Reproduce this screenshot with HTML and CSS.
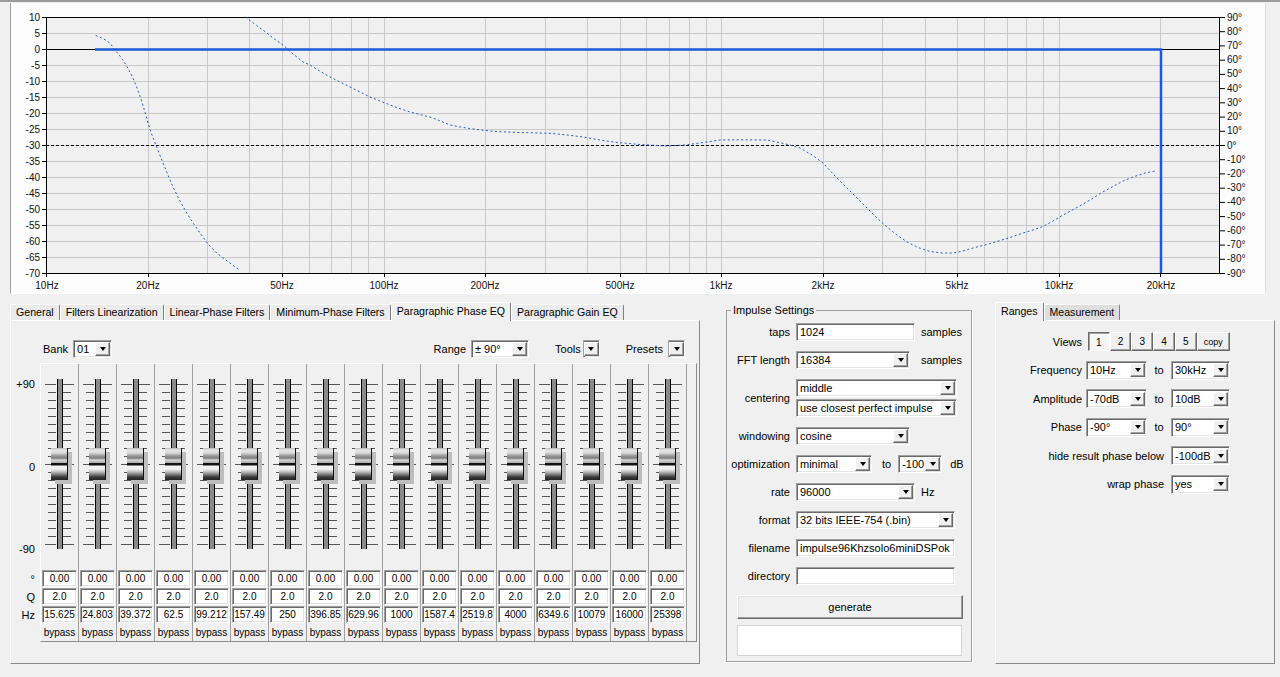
FILE: index.html
```html
<!DOCTYPE html>
<html lang="en">
<head>
<meta charset="UTF-8">
<title>rePhase</title>
<link rel="stylesheet" href="styles.css">
</head>
<body>
<div class="topbar"></div>

<!-- GRAPH -->
<div class="graph">
    <svg width="1254" height="290" viewBox="11 3 1254 290" font-family="Liberation Sans, Arial, sans-serif" font-size="10">
        <rect x="46" y="17" width="1174" height="256" fill="#f0f0f0"/>
        <path stroke="#c9c9c9" stroke-width="1" fill="none" d="
            M148.5 17V273 M207.5 17V273 M249.5 17V273 M282.5 17V273 M309.5 17V273 M331.5 17V273 M351.5 17V273 M368.5 17V273
            M384.5 17V273 M485.5 17V273 M545.5 17V273 M587.5 17V273 M620.5 17V273 M646.5 17V273 M669.5 17V273 M689.5 17V273 M706.5 17V273
            M721.5 17V273 M823.5 17V273 M882.5 17V273 M925.5 17V273 M957.5 17V273 M984.5 17V273 M1007.5 17V273 M1026.5 17V273 M1043.5 17V273
            M1059.5 17V273 M1160.5 17V273
            M46 33.5H1220 M46 65.5H1220 M46 81.5H1220 M46 97.5H1220 M46 113.5H1220 M46 129.5H1220 M46 145.5H1220
            M46 161.5H1220 M46 177.5H1220 M46 193.5H1220 M46 209.5H1220 M46 225.5H1220 M46 241.5H1220 M46 257.5H1220"/>
        <rect x="46.5" y="17.5" width="1173" height="256" fill="none" stroke="#000"/>
        <path stroke="#000" fill="none" d="
            M42 17.5H46 M42 33.5H46 M42 49.5H46 M42 65.5H46 M42 81.5H46 M42 97.5H46 M42 113.5H46 M42 129.5H46 M42 145.5H46
            M42 161.5H46 M42 177.5H46 M42 193.5H46 M42 209.5H46 M42 225.5H46 M42 241.5H46 M42 257.5H46 M42 273.5H46
            M1220 31.7H1225 M1220 45.9H1225 M1220 60.2H1225 M1220 74.4H1225 M1220 88.6H1225 M1220 102.8H1225 M1220 117.1H1225
            M1220 131.3H1225 M1220 145.5H1225 M1220 159.7H1225 M1220 173.9H1225 M1220 188.2H1225 M1220 202.4H1225 M1220 216.6H1225
            M1220 230.8H1225 M1220 245.1H1225 M1220 259.3H1225 M1220 17.5H1225 M1220 273.5H1225
            M46.5 273V277 M148.5 273V277 M282.5 273V277 M384.5 273V277 M485.5 273V277 M620.5 273V277 M721.5 273V277
            M823.5 273V277 M957.5 273V277 M1059.5 273V277 M1160.5 273V277"/>
        <path stroke="#000" d="M46 49.5H1220"/>
        <path stroke="#000" stroke-dasharray="3 2" d="M46 145.5H1220"/>
        <path stroke="#1c5ad8" stroke-width="2.5" fill="none" d="M95 49.5H1161V273"/>
        <path stroke="#2455c4" stroke-width="1" stroke-dasharray="2 2.5" fill="none" d="
            M95.7 35.5L103 38.5 110 43 115 50 120 56 126.7 66 132 76 136.7 87 141 99 145 112 148 123 152 135 156.7 147 163 163 168 175
            173 187 180 201 186.7 213 193 223 200 233 208 244 216.7 253 223 258 230 263 240 270.5
            M245.5 17L252 22 260 28 267 33 273 38 283 45 292 53 303 62 310 65 318 70 330 77 340 82 350 87 360 92 370 97 385 103
            398 108 410 112 422 115 433 118 450 125 463 127.5 477 129.5 490 131 500 131.7 520 132.5 550 133.3 567 135 583 137
            600 140 617 142.5 640 144.5 667 146 685 145 700 143 720 140 740 139.8 767 140 780 142.7 790 145 800 148 812 155
            823 163 835 176 847 188 857 198 867 208 877 218 887 227 897 235 907 242 918 247.5 930 251.5 942 253 953 253 963 251
            973 248 985 245 997 241.5 1010 237.5 1023 233 1033 230 1043 226.5 1053 221 1063 215 1077 207.5 1090 200 1101 193
            1113 186.5 1123 181 1133 177 1145 173 1157 170.7"/>
        <g text-anchor="end" fill="#111">
            <text x="40" y="20.5">10</text><text x="40" y="36.5">5</text><text x="40" y="52.5">0</text>
            <text x="40" y="68.5">-5</text><text x="40" y="84.5">-10</text><text x="40" y="100.5">-15</text>
            <text x="40" y="116.5">-20</text><text x="40" y="132.5">-25</text><text x="40" y="148.5">-30</text>
            <text x="40" y="164.5">-35</text><text x="40" y="180.5">-40</text><text x="40" y="196.5">-45</text>
            <text x="40" y="212.5">-50</text><text x="40" y="228.5">-55</text><text x="40" y="244.5">-60</text>
            <text x="40" y="260.5">-65</text><text x="40" y="276.5">-70</text>
        </g>
        <g fill="#111">
            <text x="1227" y="20.5">90°</text><text x="1227" y="34.7">80°</text><text x="1227" y="48.9">70°</text>
            <text x="1227" y="63.2">60°</text><text x="1227" y="77.4">50°</text><text x="1227" y="91.6">40°</text>
            <text x="1227" y="105.8">30°</text><text x="1227" y="120.1">20°</text><text x="1227" y="134.3">10°</text>
            <text x="1227" y="148.5">0°</text><text x="1227" y="162.7">-10°</text><text x="1227" y="176.9">-20°</text>
            <text x="1227" y="191.2">-30°</text><text x="1227" y="205.4">-40°</text><text x="1227" y="219.6">-50°</text>
            <text x="1227" y="233.8">-60°</text><text x="1227" y="248.1">-70°</text><text x="1227" y="262.3">-80°</text>
            <text x="1227" y="276.5">-90°</text>
        </g>
        <g text-anchor="middle" fill="#111">
            <text x="47" y="289">10Hz</text><text x="148" y="289">20Hz</text><text x="282" y="289">50Hz</text>
            <text x="384" y="289">100Hz</text><text x="485" y="289">200Hz</text><text x="620" y="289">500Hz</text>
            <text x="721" y="289">1kHz</text><text x="823" y="289">2kHz</text><text x="957" y="289">5kHz</text>
            <text x="1059" y="289">10kHz</text><text x="1161" y="289">20kHz</text>
        </g>
    </svg>
</div>

<div class="bottom">
    <!-- LEFT TABS -->
    <div class="tabctl eq-tabs">
        <div class="tabs">
            <div class="tab">General</div>
            <div class="tab">Filters Linearization</div>
            <div class="tab">Linear-Phase Filters</div>
            <div class="tab">Minimum-Phase Filters</div>
            <div class="tab active">Paragraphic Phase EQ</div>
            <div class="tab">Paragraphic Gain EQ</div>
        </div>
        <div class="tab-panel eq-panel">
            <div class="bank-row">
                <span>Bank</span>
                <div class="combo w-bank"><span class="text">01</span><span class="drop"></span></div>
                <span class="push">Range</span>
                <div class="combo w-range"><span class="text">± 90°</span><span class="drop"></span></div>
                <span class="gap-l">Tools</span>
                <div class="combo w-btn tools"><span class="drop"></span></div>
                <span class="gap-l">Presets</span>
                <div class="combo w-btn"><span class="drop"></span></div>
            </div>

            <div class="fader-area">
                <div class="scale">
                    <div class="scale-top"><span>+90</span><span>0</span><span>-90</span></div>
                    <div class="scale-row">°</div>
                    <div class="scale-row">Q</div>
                    <div class="scale-row">Hz</div>
                </div>
                <div class="group">
                    <div class="strip"><div class="fader"><span class="knob"></span></div><div class="val">0.00</div><div class="val">2.0</div><div class="val">15.625</div><div class="bypass">bypass</div></div>
                    <div class="strip"><div class="fader"><span class="knob"></span></div><div class="val">0.00</div><div class="val">2.0</div><div class="val">24.803</div><div class="bypass">bypass</div></div>
                    <div class="strip"><div class="fader"><span class="knob"></span></div><div class="val">0.00</div><div class="val">2.0</div><div class="val">39.372</div><div class="bypass">bypass</div></div>
                    <div class="strip"><div class="fader"><span class="knob"></span></div><div class="val">0.00</div><div class="val">2.0</div><div class="val">62.5</div><div class="bypass">bypass</div></div>
                    <div class="strip"><div class="fader"><span class="knob"></span></div><div class="val">0.00</div><div class="val">2.0</div><div class="val">99.212</div><div class="bypass">bypass</div></div>
                    <div class="strip"><div class="fader"><span class="knob"></span></div><div class="val">0.00</div><div class="val">2.0</div><div class="val">157.49</div><div class="bypass">bypass</div></div>
                    <div class="strip"><div class="fader"><span class="knob"></span></div><div class="val">0.00</div><div class="val">2.0</div><div class="val">250</div><div class="bypass">bypass</div></div>
                    <div class="strip"><div class="fader"><span class="knob"></span></div><div class="val">0.00</div><div class="val">2.0</div><div class="val">396.85</div><div class="bypass">bypass</div></div>
                    <div class="strip"><div class="fader"><span class="knob"></span></div><div class="val">0.00</div><div class="val">2.0</div><div class="val">629.96</div><div class="bypass">bypass</div></div>
                    <div class="strip"><div class="fader"><span class="knob"></span></div><div class="val">0.00</div><div class="val">2.0</div><div class="val">1000</div><div class="bypass">bypass</div></div>
                    <div class="strip"><div class="fader"><span class="knob"></span></div><div class="val">0.00</div><div class="val">2.0</div><div class="val">1587.4</div><div class="bypass">bypass</div></div>
                    <div class="strip"><div class="fader"><span class="knob"></span></div><div class="val">0.00</div><div class="val">2.0</div><div class="val">2519.8</div><div class="bypass">bypass</div></div>
                    <div class="strip"><div class="fader"><span class="knob"></span></div><div class="val">0.00</div><div class="val">2.0</div><div class="val">4000</div><div class="bypass">bypass</div></div>
                    <div class="strip"><div class="fader"><span class="knob"></span></div><div class="val">0.00</div><div class="val">2.0</div><div class="val">6349.6</div><div class="bypass">bypass</div></div>
                    <div class="strip"><div class="fader"><span class="knob"></span></div><div class="val">0.00</div><div class="val">2.0</div><div class="val">10079</div><div class="bypass">bypass</div></div>
                    <div class="strip"><div class="fader"><span class="knob"></span></div><div class="val">0.00</div><div class="val">2.0</div><div class="val">16000</div><div class="bypass">bypass</div></div>
                    <div class="strip"><div class="fader"><span class="knob"></span></div><div class="val">0.00</div><div class="val">2.0</div><div class="val">25398</div><div class="bypass">bypass</div></div>
                </div>
            </div>
        </div>
    </div>

    <!-- IMPULSE SETTINGS -->
    <fieldset class="impulse">
        <legend>Impulse Settings</legend>
        <div class="imp-grid">
            <span class="lbl">taps</span>
            <div class="field w-119">1024</div>
            <span class="unit">samples</span>

            <span class="lbl">FFT length</span>
            <div class="combo w-114"><span class="text">16384</span><span class="drop"></span></div>
            <span class="unit">samples</span>

            <span class="lbl">centering</span>
            <div class="stack">
                <div class="combo w-161"><span class="text">middle</span><span class="drop"></span></div>
                <div class="combo w-161"><span class="text">use closest perfect impulse</span><span class="drop"></span></div>
            </div>

            <span class="lbl">windowing</span>
            <div class="combo w-114 span"><span class="text">cosine</span><span class="drop"></span></div>

            <span class="lbl">optimization</span>
            <div class="opt span">
                <div class="combo w-76"><span class="text">minimal</span><span class="drop"></span></div>
                <span class="to">to</span>
                <div class="combo w-44"><span class="text">-100</span><span class="drop"></span></div>
                <span class="db">dB</span>
            </div>

            <span class="lbl">rate</span>
            <div class="combo w-119"><span class="text">96000</span><span class="drop"></span></div>
            <span class="unit">Hz</span>

            <span class="lbl">format</span>
            <div class="combo w-159 span"><span class="text">32 bits IEEE-754 (.bin)</span><span class="drop"></span></div>

            <span class="lbl">filename</span>
            <div class="field w-159 span">impulse96Khzsolo6miniDSPok</div>

            <span class="lbl">directory</span>
            <div class="field w-159 span"></div>
        </div>
        <button class="generate">generate</button>
        <div class="output"></div>
    </fieldset>

    <!-- RANGES -->
    <div class="tabctl ranges-tabs">
        <div class="tabs">
            <div class="tab active">Ranges</div>
            <div class="tab dim">Measurement</div>
        </div>
        <div class="tab-panel ranges-panel">
            <div class="ranges-grid">
                <span class="lbl">Views</span>
                <div class="views">
                    <span class="vbtn pressed">1</span>
                    <span class="vbtn">2</span>
                    <span class="vbtn">3</span>
                    <span class="vbtn">4</span>
                    <span class="vbtn">5</span>
                    <span class="vbtn copy">copy</span>
                </div>

                <span class="lbl">Frequency</span>
                <div class="combo"><span class="text">10Hz</span><span class="drop"></span></div>
                <span class="to">to</span>
                <div class="combo"><span class="text">30kHz</span><span class="drop"></span></div>

                <span class="lbl">Amplitude</span>
                <div class="combo"><span class="text">-70dB</span><span class="drop"></span></div>
                <span class="to">to</span>
                <div class="combo"><span class="text">10dB</span><span class="drop"></span></div>

                <span class="lbl">Phase</span>
                <div class="combo"><span class="text">-90°</span><span class="drop"></span></div>
                <span class="to">to</span>
                <div class="combo"><span class="text">90°</span><span class="drop"></span></div>

                <span class="lbl wide">hide result phase below</span>
                <div class="combo"><span class="text">-100dB</span><span class="drop"></span></div>

                <span class="lbl wide">wrap phase</span>
                <div class="combo"><span class="text">yes</span><span class="drop"></span></div>
            </div>
        </div>
    </div>
</div>
</body>
</html>
```

FILE: styles.css
```css
* {
    box-sizing: border-box;
}

body {
    margin: 0;
    width: 1280px;
    height: 677px;
    overflow: hidden;
    background: #f0f0f0;
    font-family: "Liberation Sans", Arial, sans-serif;
    font-size: 11px;
    color: #000;
}

.topbar {
    height: 2px;
    background: #9b9b9b;
}

/* GRAPH */
.graph {
    margin: 1px 14px 0 10px;
    height: 291px;
    background: #fcfcfc;
    border-left: 1px solid #a0a0a0;
    border-right: 1px solid #dcdcdc;
    border-bottom: 1px solid #fff;
}

.graph svg {
    display: block;
}

/* BOTTOM AREA */
.bottom {
    display: flex;
    align-items: flex-start;
    margin-top: 8px;
    padding-left: 10px;
}

/* TAB CONTROLS */
.tabs {
    display: flex;
    height: 18px;
}

.tab {
    margin-top: 2px;
    height: 16px;
    padding: 0 5px;
    font-size: 10.6px;
    line-height: 14px;
    white-space: nowrap;
    background: #ebebeb;
    border: 1px solid;
    border-color: #fff #808080 transparent #fff;
    border-bottom: none;
    border-radius: 2px 2px 0 0;
}

.tab.active {
    position: relative;
    z-index: 1;
    margin-top: 0;
    height: 19px;
    line-height: 17px;
    background: #f0f0f0;
}

.tab.dim {
    background: #dedede;
}

.tab-panel {
    border: 1px solid;
    border-color: #fff #8a8a8a #8a8a8a #fff;
}

.eq-tabs {
    width: 690px;
}

.eq-panel {
    height: 344px;
}

/* BANK ROW */
.bank-row {
    display: flex;
    align-items: center;
    gap: 5px;
    margin: 19px 14px 0 32px;
}

.push {
    margin-left: auto;
}

.gap-l {
    margin-left: 21px;
}

.tools {
    margin-left: -3px;
}

/* COMBO BOXES AND FIELDS */
.combo, .field, .val {
    background: #fff;
    border: 1px solid;
    border-color: #a0a0a0 #fff #fff #a0a0a0;
    box-shadow: inset 1px 1px 0 #696969, inset -1px -1px 0 #e3e3e3;
}

.combo {
    display: flex;
    align-items: center;
    height: 18px;
}

.combo .text {
    flex: 1;
    padding-left: 3px;
    white-space: nowrap;
    overflow: hidden;
}

.combo .drop {
    flex: none;
    display: flex;
    align-items: center;
    justify-content: center;
    width: 15px;
    height: 14px;
    margin-right: 1px;
    background: #f0f0f0;
    border: 1px solid;
    border-color: #fff #696969 #696969 #fff;
    box-shadow: inset -1px -1px 0 #a0a0a0;
}

.combo .drop::after {
    content: "";
    border-top: 4px solid #000;
    border-left: 3.5px solid transparent;
    border-right: 3.5px solid transparent;
}

.field {
    height: 18px;
    padding-left: 3px;
    line-height: 16px;
    white-space: nowrap;
}

.w-bank { width: 39px; }
.w-range { width: 58px; }
.w-btn { width: 17px; }
.w-44 { width: 44px; }
.w-76 { width: 76px; }
.w-114 { width: 114px; }
.w-119 { width: 119px; }
.w-159 { width: 159px; }
.w-161 { width: 161px; }

/* FADERS */
.fader-area {
    display: flex;
    margin-top: 5px;
}

.scale {
    width: 29px;
    padding-right: 5px;
    text-align: right;
}

.scale-top {
    display: flex;
    flex-direction: column;
    justify-content: space-between;
    height: 207px;
    padding: 15px 0;
    line-height: 12px;
}

.scale-row {
    height: 18px;
    line-height: 18px;
}

.group {
    display: flex;
    padding-right: 9px;
    border: 1px solid;
    border-color: #fff #8a8a8a #8a8a8a #fff;
}

.strip {
    width: 38px;
    height: 277px;
    border-right: 1px solid #a0a0a0;
}

.fader {
    position: relative;
    height: 206px;
    background:
        linear-gradient(#555, #555) 4px 100px / 29px 1px no-repeat,
        linear-gradient(#555, #555) 4px 20px / 11px 1px no-repeat,
        linear-gradient(#555, #555) 22px 20px / 11px 1px no-repeat,
        linear-gradient(#555, #555) 4px 180px / 11px 1px no-repeat,
        linear-gradient(#555, #555) 22px 180px / 11px 1px no-repeat,
        repeating-linear-gradient(to bottom, #555 0 1px, transparent 1px 8px) 7px 20px / 8px 161px no-repeat,
        repeating-linear-gradient(to bottom, #555 0 1px, transparent 1px 8px) 22px 20px / 8px 161px no-repeat;
}

/* slider track */
.fader::before {
    content: "";
    position: absolute;
    left: 16px;
    top: 15px;
    width: 4px;
    height: 170px;
    background: #8a8a8a;
    border: 1px solid #000;
    border-width: 0 1px;
}

.knob {
    position: absolute;
    left: 10px;
    top: 84px;
    width: 17px;
    height: 32px;
    border-right: 1px solid #111;
    box-shadow: 4px 4px 0 #bdbdbd;
    background: linear-gradient(to bottom,
        #b8b8b8 0, #e6e6e6 2px, #dadada 5px, #a8a8a8 7px, #7a7a7a 10px,
        #d6d6d6 12px, #b0b0b0 14.5px, #111 15px, #111 17px, #f4f4f4 18px,
        #f0f0f0 21px, #cfcfcf 23px, #8a8a8a 26px, #3a3a3a 29px, #222 32px);
}

.val {
    width: 35px;
    height: 17px;
    margin: 0 0 1px 1px;
    font-size: 10px;
    line-height: 15px;
    text-align: center;
}

.bypass {
    font-size: 10px;
    line-height: 17px;
    text-align: center;
}

/* IMPULSE SETTINGS */
.impulse {
    width: 246px;
    margin: 2px 0 0 26px;
    padding: 0 0 5px;
    border: 1px solid #a0a0a0;
    box-shadow: 1px 1px 0 #fff;
}

.impulse legend {
    margin-left: 4px;
    padding: 0 2px;
    line-height: 13px;
}

.imp-grid {
    display: grid;
    grid-template-columns: 63px 119px auto;
    column-gap: 6px;
    row-gap: 10px;
    align-items: center;
    margin-top: 6px;
}

.lbl {
    text-align: right;
    white-space: nowrap;
}

.span {
    grid-column: 2 / 4;
}

.stack {
    grid-column: 2 / 4;
    display: flex;
    flex-direction: column;
    gap: 2px;
}

.opt {
    display: flex;
    align-items: center;
}

.opt .to {
    margin: 0 7px 0 10px;
}

.opt .db {
    margin-left: 8px;
}

.generate {
    display: block;
    width: 226px;
    height: 24px;
    margin: 10px 0 0 10px;
    padding: 0;
    font: inherit;
    background: #f0f0f0;
    border: 1px solid;
    border-color: #fff #696969 #696969 #fff;
    box-shadow: inset -1px -1px 0 #a0a0a0, inset 1px 1px 0 #e3e3e3;
}

.output {
    width: 225px;
    height: 31px;
    margin: 6px 0 0 10px;
    background: #fff;
    border: 1px solid #d4d4d4;
}

/* RANGES */
.ranges-tabs {
    width: 280px;
    margin-left: 23px;
}

.ranges-panel {
    height: 344px;
}

.ranges-grid {
    display: grid;
    grid-template-columns: 90px 61px 24px 59px;
    grid-auto-rows: 19px;
    row-gap: 9.5px;
    align-items: center;
    padding-top: 11px;
}

.ranges-grid .lbl {
    padding-right: 4px;
}

.ranges-grid .lbl.wide {
    grid-column: 1 / 4;
    padding-right: 7px;
}

.ranges-grid .combo {
    height: 19px;
}

.ranges-grid .to {
    text-align: center;
}

.views {
    grid-column: 2 / 5;
    display: flex;
    margin-left: 2px;
    height: 19px;
}

.vbtn {
    width: 22px;
    display: flex;
    align-items: center;
    justify-content: center;
    font-size: 10px;
    background: #f0f0f0;
    border: 1px solid;
    border-color: #fff #696969 #696969 #fff;
    box-shadow: inset -1px -1px 0 #a0a0a0;
}

.vbtn.pressed {
    background: #f6f6f6;
    border-color: #696969 #fff #fff #696969;
    box-shadow: inset 1px 1px 0 #a0a0a0;
    padding-top: 2px;
}

.vbtn.copy {
    width: 34px;
    font-size: 9px;
}
```
